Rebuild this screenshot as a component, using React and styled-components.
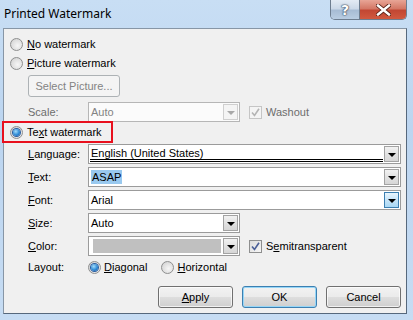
import React from 'react';
import styled, { createGlobalStyle, css } from 'styled-components';

const GlobalStyle = createGlobalStyle`
  html, body {
    margin: 0;
    padding: 0;
    background: #c4dcf3;
  }
  body {
    font-family: 'Liberation Sans', Arial, sans-serif;
    font-size: 11px;
    color: #000;
  }
`;

function Window({ children }) {
  return (
    <Frame>
      <TitleBar>
        <Title>Printed Watermark</Title>
        <CaptionButtons>
          <HelpButton>?</HelpButton>
          <CloseButton>
            <svg width="15" height="12" viewBox="0 0 15 12">
              <path
                d="M2 1.5 L13 10.5 M13 1.5 L2 10.5"
                stroke="#5a2318"
                strokeWidth="4.2"
                strokeLinecap="square"
              />
              <path
                d="M2 1.5 L13 10.5 M13 1.5 L2 10.5"
                stroke="#fff"
                strokeWidth="2.4"
                strokeLinecap="square"
              />
            </svg>
          </CloseButton>
        </CaptionButtons>
      </TitleBar>
      <Client>{children}</Client>
    </Frame>
  );
}

function Radio({ checked }) {
  return (
    <RadioCircle>
      {checked && <RadioDot />}
    </RadioCircle>
  );
}

function Checkbox({ checked, disabled }) {
  return (
    <CheckBox $disabled={disabled}>
      {checked && (
        <svg width="9" height="9" viewBox="0 0 9 9">
          <path
            d="M1 4.5 L3.5 7.5 L8 0.8"
            fill="none"
            stroke={disabled ? '#b4b4b4' : '#4a5f97'}
            strokeWidth="1.6"
          />
        </svg>
      )}
    </CheckBox>
  );
}

function Combo({ children, width, disabled, hot, swatch, doubleLine, selected }) {
  return (
    <ComboBox $width={width} $disabled={disabled}>
      <ComboText $disabled={disabled} $doubleLine={doubleLine}>
        {swatch ? <Swatch /> : selected ? <Selection>{children}</Selection> : children}
      </ComboText>
      <DropButton $disabled={disabled} $hot={hot}>
        <Arrow $disabled={disabled} />
      </DropButton>
    </ComboBox>
  );
}

export default function App() {
  return (
    <>
      <GlobalStyle />
      <Window>
        <OptionRow>
          <Radio />
          <span><u>N</u>o watermark</span>
        </OptionRow>
        <OptionRow $top={1}>
          <Radio />
          <span><u>P</u>icture watermark</span>
        </OptionRow>
        <IndentRow $top={3}>
          <PushButton $disabled $width={92}>Select Picture...</PushButton>
        </IndentRow>
        <FieldRow $top={5}>
          <FieldLabel $disabled>Scale:</FieldLabel>
          <Combo width={152} disabled>Auto</Combo>
          <CheckGroup>
            <Checkbox checked disabled />
            <CheckLabel $disabled>Washout</CheckLabel>
          </CheckGroup>
        </FieldRow>
        <OptionRow $top={1}>
          <Highlight>
            <Radio checked />
            <span>Te<u>x</u>t watermark</span>
          </Highlight>
        </OptionRow>
        <FieldRow $top={3}>
          <FieldLabel><u>L</u>anguage:</FieldLabel>
          <Combo doubleLine>English (United States)</Combo>
        </FieldRow>
        <FieldRow $top={3}>
          <FieldLabel><u>T</u>ext:</FieldLabel>
          <Combo selected>ASAP</Combo>
        </FieldRow>
        <FieldRow $top={3}>
          <FieldLabel><u>F</u>ont:</FieldLabel>
          <Combo hot>Arial</Combo>
        </FieldRow>
        <FieldRow $top={3}>
          <FieldLabel><u>S</u>ize:</FieldLabel>
          <Combo width={152}>Auto</Combo>
        </FieldRow>
        <FieldRow $top={3}>
          <FieldLabel><u>C</u>olor:</FieldLabel>
          <Combo width={152} swatch />
          <CheckGroup>
            <Checkbox checked />
            <CheckLabel>S<u>e</u>mitransparent</CheckLabel>
          </CheckGroup>
        </FieldRow>
        <FieldRow $top={2} $height={18}>
          <FieldLabel>Layout:</FieldLabel>
          <LayoutOptions>
            <RadioChoice>
              <Radio checked />
              <span><u>D</u>iagonal</span>
            </RadioChoice>
            <RadioChoice>
              <Radio />
              <span><u>H</u>orizontal</span>
            </RadioChoice>
          </LayoutOptions>
        </FieldRow>
        <ButtonRow>
          <PushButton><u>A</u>pply</PushButton>
          <PushButton $default>OK</PushButton>
          <PushButton>Cancel</PushButton>
        </ButtonRow>
      </Window>
    </>
  );
}

const Frame = styled.div`
  width: 413px;
  height: 320px;
  display: flex;
  flex-direction: column;
  overflow: hidden;
  background: linear-gradient(180deg, #c8def4 0%, #bcd5f0 40%, #c6dcf3 100%);
`;

const TitleBar = styled.div`
  height: 28px;
  flex: none;
  display: flex;
  align-items: flex-start;
  padding-left: 4px;
`;

const Title = styled.div`
  font-family: 'Noto Sans', 'Liberation Sans', sans-serif;
  font-size: 12px;
  line-height: 28px;
  color: #000;
`;

const CaptionButtons = styled.div`
  display: flex;
  margin-left: auto;
  margin-right: 6px;
  height: 19px;
  border: 1px solid #6d7d8f;
  border-top: none;
  border-radius: 0 0 5px 5px;
  overflow: hidden;
`;

const captionBase = css`
  display: flex;
  align-items: center;
  justify-content: center;
  height: 100%;
`;

const HelpButton = styled.div`
  ${captionBase};
  width: 28px;
  border-right: 1px solid #6d7d8f;
  background: linear-gradient(180deg, #e3ebf4 0%, #ccd9e8 45%, #a7bcd4 55%, #b9cde2 100%);
  color: #fff;
  font-family: 'DejaVu Sans', sans-serif;
  font-weight: bold;
  font-size: 14px;
  text-shadow: 0 0 1px #39475a, 0 0 1px #39475a, 0 0 2px #39475a;
`;

const CloseButton = styled.div`
  ${captionBase};
  width: 46px;
  background: linear-gradient(180deg, #e8a596 0%, #d47866 45%, #c24733 55%, #d1593f 100%);
`;

const Client = styled.div`
  flex: 1;
  margin: 0 6px 6px 3px;
  border: 1px solid #8796a6;
  border-right-color: #56687c;
  border-bottom-color: #56687c;
  background: #f0f0f0;
  display: flex;
  flex-direction: column;
  padding-top: 6px;
`;

const OptionRow = styled.div`
  display: flex;
  align-items: center;
  height: 18px;
  margin-top: ${(p) => p.$top || 0}px;
  padding-left: 6px;
  gap: 4px;
`;

const Highlight = styled.div`
  display: flex;
  align-items: center;
  gap: 4px;
  height: 18px;
  width: 107px;
  margin-left: -6px;
  padding-left: 6px;
  box-sizing: border-box;
  outline: 2px solid #e8101e;
`;

const RadioCircle = styled.span`
  width: 13px;
  height: 13px;
  box-sizing: border-box;
  flex: none;
  border-radius: 50%;
  border: 1px solid #8e8f8f;
  background: radial-gradient(circle at 60% 60%, #f6f6f6 0%, #dedede 60%, #c8c8c8 100%);
  display: flex;
  align-items: center;
  justify-content: center;
`;

const RadioDot = styled.span`
  width: 7px;
  height: 7px;
  border-radius: 50%;
  background: radial-gradient(circle at 40% 35%, #a4dcfa 0%, #2e8bd6 55%, #14509a 100%);
  box-shadow: 0 0 0 1px #2a5da0;
`;

const IndentRow = styled.div`
  display: flex;
  margin-top: ${(p) => p.$top || 0}px;
  padding-left: 24px;
`;

const FieldRow = styled.div`
  display: flex;
  align-items: center;
  height: ${(p) => p.$height || 20}px;
  margin-top: ${(p) => p.$top || 0}px;
  padding: 0 5px 0 24px;
`;

const FieldLabel = styled.div`
  width: 60px;
  flex: none;
  color: ${(p) => (p.$disabled ? '#6d6d6d' : '#000')};
`;

const ComboBox = styled.div`
  ${(p) => (p.$width ? `width: ${p.$width}px; flex: none;` : 'flex: 1;')}
  height: 20px;
  box-sizing: border-box;
  display: flex;
  border: 1px solid ${(p) => (p.$disabled ? '#b6b6b6' : '#9b9b9b')};
  background: ${(p) => (p.$disabled ? '#fbfbfb' : '#fff')};
  padding: 1px;
`;

const ComboText = styled.div`
  flex: 1;
  display: flex;
  align-items: center;
  padding-left: 1px;
  color: ${(p) => (p.$disabled ? '#838383' : '#000')};
  ${(p) =>
    p.$doubleLine &&
    css`
      border-bottom: 3px double #000;
      margin-right: 1px;
    `}
`;

const Selection = styled.span`
  background: #99c9ef;
  padding: 1px 1px;
`;

const Swatch = styled.span`
  flex: 1;
  height: 14px;
  margin: 0 2px 0 2px;
  background: #c0c0c0;
`;

const DropButton = styled.div`
  width: 15px;
  flex: none;
  display: flex;
  align-items: center;
  justify-content: center;
  box-sizing: border-box;
  border: 1px solid ${(p) => (p.$disabled ? '#cfcfcf' : p.$hot ? '#3c7fb1' : '#a3a3a3')};
  background: ${(p) =>
    p.$disabled
      ? '#f4f4f4'
      : p.$hot
      ? 'linear-gradient(180deg, #e9f5fd 0%, #c6e4f8 50%, #a9d8f5 100%)'
      : 'linear-gradient(180deg, #f2f2f2 0%, #e2e2e2 50%, #d6d6d6 100%)'};
`;

const Arrow = styled.span`
  width: 0;
  height: 0;
  border-left: 4px solid transparent;
  border-right: 4px solid transparent;
  border-top: 4px solid ${(p) => (p.$disabled ? '#a8a8a8' : '#000')};
  margin-top: 1px;
`;

const CheckGroup = styled.div`
  display: flex;
  align-items: center;
  gap: 4px;
  margin-left: 9px;
`;

const CheckBox = styled.span`
  width: 13px;
  height: 13px;
  box-sizing: border-box;
  flex: none;
  display: flex;
  align-items: center;
  justify-content: center;
  border: 1px solid ${(p) => (p.$disabled ? '#c5c5c5' : '#8e8f8f')};
  background: ${(p) =>
    p.$disabled ? '#f4f4f4' : 'linear-gradient(135deg, #dcdcdc 0%, #f6f6f6 100%)'};
`;

const CheckLabel = styled.span`
  color: ${(p) => (p.$disabled ? '#6d6d6d' : '#000')};
`;

const LayoutOptions = styled.div`
  display: flex;
  align-items: center;
  gap: 14px;
`;

const RadioChoice = styled.div`
  display: flex;
  align-items: center;
  gap: 3px;
`;

const ButtonRow = styled.div`
  display: flex;
  justify-content: flex-end;
  gap: 9px;
  margin-top: 10px;
  padding-right: 5px;
`;

const PushButton = styled.div`
  width: ${(p) => p.$width || 75}px;
  height: 22px;
  box-sizing: border-box;
  display: flex;
  align-items: center;
  justify-content: center;
  border-radius: 3px;
  border: 1px solid #707070;
  background: linear-gradient(180deg, #f2f2f2 0%, #ebebeb 48%, #dddddd 52%, #cfcfcf 100%);
  box-shadow: inset 0 0 0 1px rgba(255, 255, 255, 0.7);
  ${(p) =>
    p.$default &&
    css`
      border-color: #3c7fb1;
      box-shadow: inset 0 0 0 1px #96d6f7;
    `}
  ${(p) =>
    p.$disabled &&
    css`
      border-color: #adb2b5;
      background: #f4f4f4;
      color: #838383;
      box-shadow: none;
    `}
`;
